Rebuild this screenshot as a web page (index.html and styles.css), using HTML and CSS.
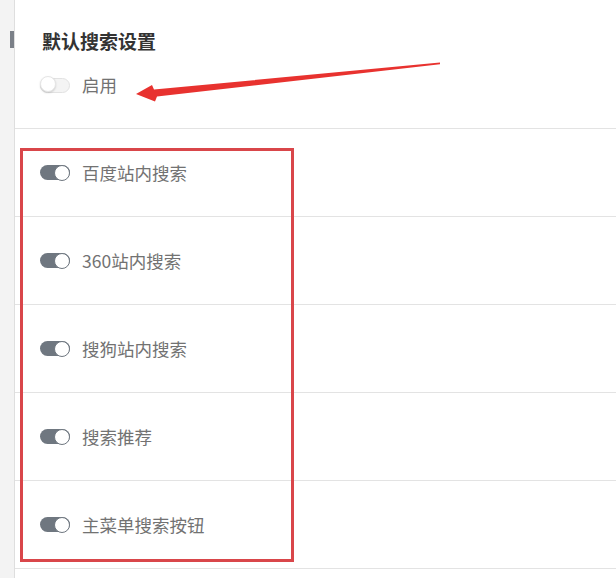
FILE: index.html
```html
<!DOCTYPE html>
<html lang="zh-CN">
<head>
<meta charset="utf-8">
<link rel="stylesheet" href="styles.css">
</head>
<body>
<div class="page">
  <aside class="rail"><span class="rail-mark"></span></aside>
  <main class="main">
    <section class="head">
      <h2 class="title">默认搜索设置</h2>
      <label class="opt">
        <span class="switch off"><span class="knob"></span></span>
        <span class="label">启用</span>
      </label>
    </section>
    <div class="row"><span class="switch on"><span class="knob"></span></span><span class="label">百度站内搜索</span></div>
    <div class="row"><span class="switch on"><span class="knob"></span></span><span class="label">360站内搜索</span></div>
    <div class="row"><span class="switch on"><span class="knob"></span></span><span class="label">搜狗站内搜索</span></div>
    <div class="row"><span class="switch on"><span class="knob"></span></span><span class="label">搜索推荐</span></div>
    <div class="row"><span class="switch on"><span class="knob"></span></span><span class="label">主菜单搜索按钮</span></div>
  </main>
  <div class="red-box"></div>
  <svg class="arrow" width="616" height="578" viewBox="0 0 616 578">
    <polygon points="136,94 152,85 154,89.6 440,62.5 440,64.2 157,96.5 155,101.5" fill="#e8322f"/>
  </svg>
</div>
</body>
</html>
```
FILE: styles.css
```css
html, body {
  margin: 0;
  padding: 0;
  background: #fff;
}
body {
  font-family: "Noto Sans CJK SC", "Noto Sans", "Liberation Sans", sans-serif;
  width: 616px;
  height: 578px;
  overflow: hidden;
}
.page {
  position: relative;
  display: flex;
  width: 616px;
  height: 578px;
}
.rail {
  width: 14px;
  flex: 0 0 14px;
  background: #f3f3f3;
  border-right: 1px solid #dedede;
  padding-top: 31px;
}
.rail-mark {
  display: block;
  width: 4px;
  height: 17px;
  margin-left: 10px;
  background: #7b8088;
}
.main {
  flex: 1;
  display: flex;
  flex-direction: column;
}
.head {
  box-sizing: border-box;
  height: 129px;
  border-bottom: 1px solid #e3e3e3;
  padding: 29px 0 0 25px;
}
.title {
  margin: 0 0 0 2px;
  font-size: 19px;
  line-height: 24px;
  font-weight: 700;
  color: #333;
}
.opt {
  display: flex;
  align-items: center;
  height: 24px;
  margin-top: 20px;
}
.row {
  display: flex;
  align-items: center;
  height: 88px;
  box-sizing: border-box;
  border-bottom: 1px solid #e3e3e3;
  padding-left: 25px;
}
.label {
  font-size: 17.5px;
  line-height: 24px;
  color: #727272;
  margin-left: 12px;
}
.switch {
  position: relative;
  display: inline-block;
  width: 30px;
  height: 15px;
  border-radius: 8px;
  flex: 0 0 auto;
}
.switch.on {
  background: #6f7780;
}
.switch.off {
  background: #f4f4f4;
  border: 1px solid #e2e2e2;
  width: 28px;
  height: 13px;
}
.knob {
  position: absolute;
  width: 16px;
  height: 16px;
  border-radius: 50%;
  background: #fff;
  box-sizing: border-box;
}
.switch.on .knob {
  right: 0;
  top: -0.5px;
  border: 1.5px solid #6f7780;
}
.switch.off .knob {
  left: -1px;
  top: -2.5px;
  border: 1px solid #e6e6e6;
  box-shadow: 0 1px 2px rgba(0,0,0,0.15);
}
.red-box {
  position: absolute;
  left: 20px;
  top: 148px;
  width: 274px;
  height: 414px;
  box-sizing: border-box;
  border: 3px solid #d9464a;
}
.arrow {
  position: absolute;
  left: 0;
  top: 0;
  pointer-events: none;
}
```
